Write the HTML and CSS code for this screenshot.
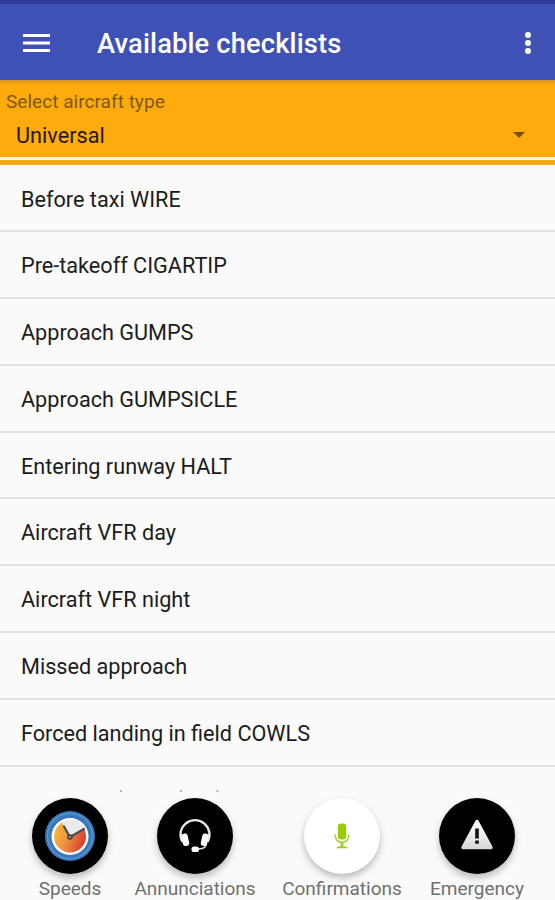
FILE: index.html
```html
<!DOCTYPE html>
<html lang="en">
  <head>
    <meta charset="UTF-8" />
    <meta name="viewport" content="width=device-width, initial-scale=1.0" />
    <title>Available checklists</title>
    <link rel="stylesheet" href="styles.css">
  </head>
  <body>
    <div class="status-bar"></div>
    <header class="toolbar">
      <svg class="menu-icon" viewBox="0 0 27 20" fill="#fff">
        <path d="M0 1h27v3H0zM0 8.500h27v3H0zM0 16h27v3H0z" />
      </svg>
      <h1>Available checklists</h1>
      <svg class="more-icon" viewBox="0 0 8 24" fill="#fff">
        <circle cx="4" cy="4" r="3" />
        <circle cx="4" cy="12" r="3" />
        <circle cx="4" cy="20" r="3" />
      </svg>
    </header>

    <section class="aircraft">
      <div class="aircraft-label">Select aircraft type</div>
      <div class="aircraft-select">
        <span>Universal</span>
        <svg class="arrow" viewBox="0 0 12 6"><path d="M0 0h12L6 6z" fill="#755008" /></svg>
      </div>
    </section>

    <ul class="checklists">
      <li>Before taxi WIRE</li>
      <li>Pre-takeoff CIGARTIP</li>
      <li>Approach GUMPS</li>
      <li>Approach GUMPSICLE</li>
      <li>Entering runway HALT</li>
      <li>Aircraft VFR day</li>
      <li>Aircraft VFR night</li>
      <li>Missed approach</li>
      <li>Forced landing in field COWLS</li>
    </ul>

    <!-- tips of the next row, cut off by the button bar -->
    <svg class="next-row" viewBox="0 0 555 26" fill="#b5b5b5">
      <path d="M120 23h2v2h-2zM180 23h2v2h-2zM216.500 23h2v2h-2z" />
    </svg>

    <nav class="actions">
      <div class="action speeds">
        <div class="fab">
          <svg width="76" height="76" viewBox="0 0 76 76">
            <defs>
              <linearGradient id="dial" x1="0" x2="1" y1="0" y2="0.300">
                <stop offset="0" stop-color="#f6c23c" />
                <stop offset="0.500" stop-color="#ee9240" />
                <stop offset="1" stop-color="#dc4733" />
              </linearGradient>
            </defs>
            <circle cx="38" cy="38" r="25" fill="#3978b8" />
            <circle cx="38" cy="38" r="22.500" fill="none" stroke="#5792ca" stroke-width="1.500" />
            <circle cx="38" cy="38.500" r="18.500" fill="#fff" />
            <circle cx="38" cy="38.500" r="16" fill="url(#dial)" />
            <path d="M38 38.500L29.500 24.200A17 17 0 0 1 53.500 31z" fill="#e9eaec" />
            <path d="M38 39L32 28.500M38 39L52 31" stroke="#4b4b4d" stroke-width="2.200" stroke-linecap="round" />
            <circle cx="38" cy="39" r="2.800" fill="#444" />
            <circle cx="38" cy="39" r="1" fill="#aaa" />
          </svg>
        </div>
        <span>Speeds</span>
      </div>
      <div class="action annunciations">
        <div class="fab">
          <svg width="76" height="76" viewBox="0 0 76 76">
            <path d="M25.500 44A14.500 14.500 0 1 1 50.500 44" fill="none" stroke="#e8e8e8" stroke-width="2.300" />
            <rect x="25" y="35.500" width="6.500" height="12.500" rx="2.800" fill="#fff" transform="rotate(-12 28.200 41.700)" />
            <rect x="44.500" y="35.500" width="6.500" height="12.500" rx="2.800" fill="#fff" transform="rotate(12 47.800 41.700)" />
            <path d="M49.500 47C47.500 50.500 45 51 40 51" fill="none" stroke="#ddd" stroke-width="1.500" />
            <rect x="34.500" y="48.500" width="7.500" height="5.500" rx="2.600" fill="#fff" />
          </svg>
        </div>
        <span>Annunciations</span>
      </div>
      <div class="action confirmations">
        <div class="fab fab-white">
          <svg width="76" height="76" viewBox="0 0 76 76">
            <rect x="33.800" y="25.500" width="8.400" height="16" rx="3.200" fill="#98cd08" />
            <path d="M31 36.500C31 47 45 47 45 36.500" fill="none" stroke="#a6d43b" stroke-width="1.600" />
            <path d="M38 44v5" stroke="#98cd08" stroke-width="2.500" />
            <path d="M32 50.200q1-2 4-2h4q3 0 4 2z" fill="#98cd08" />
          </svg>
        </div>
        <span>Confirmations</span>
      </div>
      <div class="action emergency">
        <div class="fab">
          <svg width="76" height="76" viewBox="0 0 76 76">
            <defs>
              <linearGradient id="warn" x1="0" x2="0" y1="0" y2="1">
                <stop offset="0" stop-color="#fff" />
                <stop offset="1" stop-color="#d9d9d9" />
              </linearGradient>
            </defs>
            <path d="M38 23.500L52 49.500H24z" fill="url(#warn)" stroke="url(#warn)" stroke-width="3.500" stroke-linejoin="round" />
            <path d="M36.200 30.500h3.600v10h-3.600zM36.200 42.500h3.600v3.300h-3.600z" fill="#111" />
          </svg>
        </div>
        <span>Emergency</span>
      </div>
    </nav>
  </body>
</html>
```
FILE: styles.css
```css
* {
  box-sizing: border-box;
}

body {
  margin: 0;
  width: 555px;
  height: 900px;
  overflow: hidden;
  display: flex;
  flex-direction: column;
  background: #fafafa;
  color: #1c1c1c;
  font-family: Roboto, sans-serif;
}

.status-bar {
  flex: none;
  height: 4px;
  background: #303f9f;
}

.toolbar {
  flex: none;
  display: flex;
  align-items: center;
  height: 76px;
  padding: 1px 23px 0 23px;
  background: #3f51b5;
}

.toolbar h1 {
  flex: 1;
  margin: 2px 0 0 47px;
  color: #fff;
  font-size: 27.3px;
  font-weight: 500;
  line-height: 32px;
  letter-spacing: 0.15px;
}

.menu-icon {
  width: 27px;
  height: 20px;
}

.more-icon {
  width: 8px;
  height: 24px;
}

.aircraft {
  flex: none;
  height: 85px;
  padding-top: 10px;
  background: linear-gradient(#d58f22, #ffab0d 5px);
  border-bottom: 6px solid #ffa716;
}

.aircraft-label {
  padding-left: 6px;
  color: #80590f;
  font-size: 19.1px;
  line-height: 24px;
}

.aircraft-select {
  display: flex;
  align-items: center;
  justify-content: space-between;
  height: 46px;
  padding: 0 30px 1px 16px;
  border-bottom: 3px solid #fff3dc;
  color: #241a08;
  font-size: 21.7px;
}

.arrow {
  width: 12px;
  height: 6px;
}

.checklists {
  flex: none;
  margin: 0;
  padding: 0.5px 0 0;
  list-style: none;
}

.checklists li {
  height: 66.8px;
  padding-left: 21px;
  border-bottom: 2px solid #e1e1e1;
  font-size: 21.65px;
  line-height: 67.6px;
}

.next-row {
  flex: none;
  width: 555px;
  height: 26px;
}

.actions {
  flex: none;
  display: flex;
  margin-top: 5.5px;
}

.action {
  display: flex;
  flex-direction: column;
  align-items: center;
  gap: 3px;
  color: #707070;
  font-size: 19px;
  line-height: 24px;
}

.fab {
  width: 76px;
  height: 76px;
  border-radius: 50%;
  background: #000;
  box-shadow: 0 4px 7px rgba(0, 0, 0, 0.25);
}

.fab svg {
  display: block;
}

.fab-white {
  background: #fff;
}

.speeds {
  width: 140px;
}

.annunciations {
  width: 110px;
}

.confirmations {
  width: 184px;
}

.emergency {
  width: 86px;
}
```
